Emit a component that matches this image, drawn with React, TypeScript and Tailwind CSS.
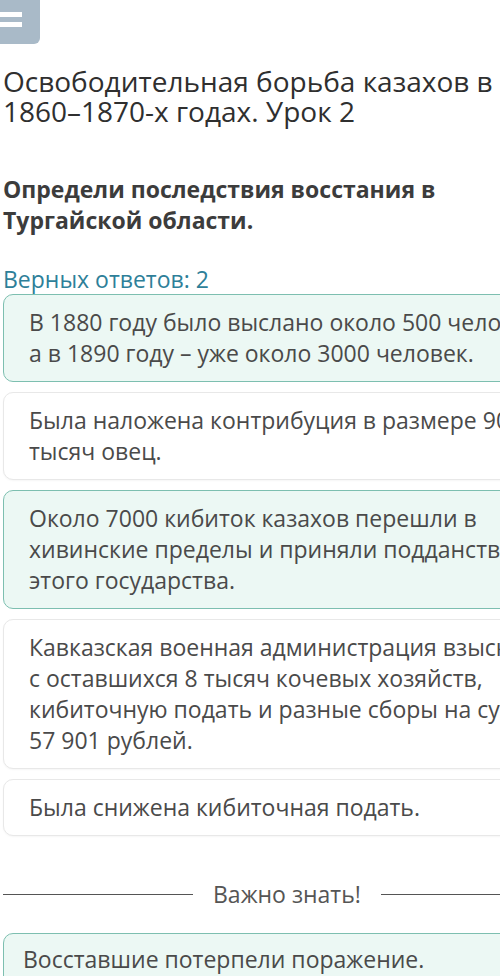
const answers = [
  { lines: ["В 1880 году было выслано около 500 человек,", "а в 1890 году – уже около 3000 человек."], picked: true },
  { lines: ["Была наложена контрибуция в размере 90", "тысяч овец."], picked: false },
  {
    lines: ["Около 7000 кибиток казахов перешли в", "хивинские пределы и приняли подданство", "этого государства."],
    picked: true,
  },
  {
    lines: [
      "Кавказская военная администрация взыскала",
      "с оставшихся 8 тысяч кочевых хозяйств,",
      "кибиточную подать и разные сборы на сумму",
      "57 901 рублей.",
    ],
    picked: false,
  },
  { lines: ["Была снижена кибиточная подать."], picked: false },
];

const cardClass = (picked: boolean) =>
  `rounded-[10px] border px-[25px] py-[12px] text-[23px] leading-[31px] text-[#4a4a4a] whitespace-nowrap ${
    picked ? "border-[#7dbfb0] bg-[#ecf8f4]" : "border-[#e8e8e8] bg-white shadow-[0_1px_2px_rgba(0,0,0,0.04)]"
  }`;

export default function App() {
  return (
    <div className="h-[976px] w-[500px] overflow-hidden bg-white font-['Open_Sans',sans-serif]">
      <div className="w-[680px] pl-[3px]">
        <button className="-ml-[3px] -mt-[6px] flex h-[50px] w-[40px] flex-col items-start justify-center gap-[5px] rounded-br-[6px] bg-[#a9bac8]">
          <span className="h-[5px] w-[22px] bg-white" />
          <span className="h-[5px] w-[22px] bg-white" />
        </button>

        <h1 className="mt-[22px] whitespace-nowrap text-[28px] font-normal leading-[30px] text-[#2f2f2f]">
          Освободительная борьба казахов в
          <br />
          1860–1870-х годах. Урок 2
        </h1>

        <h2 className="mt-[48px] whitespace-nowrap text-[23px] font-bold leading-[31px] text-[#3c3c3c]">
          Определи последствия восстания в
          <br />
          Тургайской области.
        </h2>

        <p className="mt-[30px] text-[23px] leading-[26px] text-[#2e7f99]">Верных ответов: 2</p>

        <div className="mt-[2px] flex flex-col gap-[10px]">
          {answers.map((a, i) => (
            <div key={i} className={cardClass(a.picked)}>
              {a.lines.map((l, j) => (
                <div key={j}>{l}</div>
              ))}
            </div>
          ))}
        </div>

        <div className="mt-[41px] flex items-center">
          <div className="h-px w-[190px] bg-[#555]" />
          <span className="px-[20px] text-[23px] text-[#555]">Важно знать!</span>
          <div className="h-px flex-1 bg-[#555]" />
        </div>

        <div className="mt-[21px] rounded-[10px] border border-[#7dbfb0] bg-[#ecf8f4] px-[19px] py-[10px] text-[23px] leading-[31px] text-[#4a4a4a]">
          Восставшие потерпели поражение.
        </div>
      </div>
    </div>
  );
}
